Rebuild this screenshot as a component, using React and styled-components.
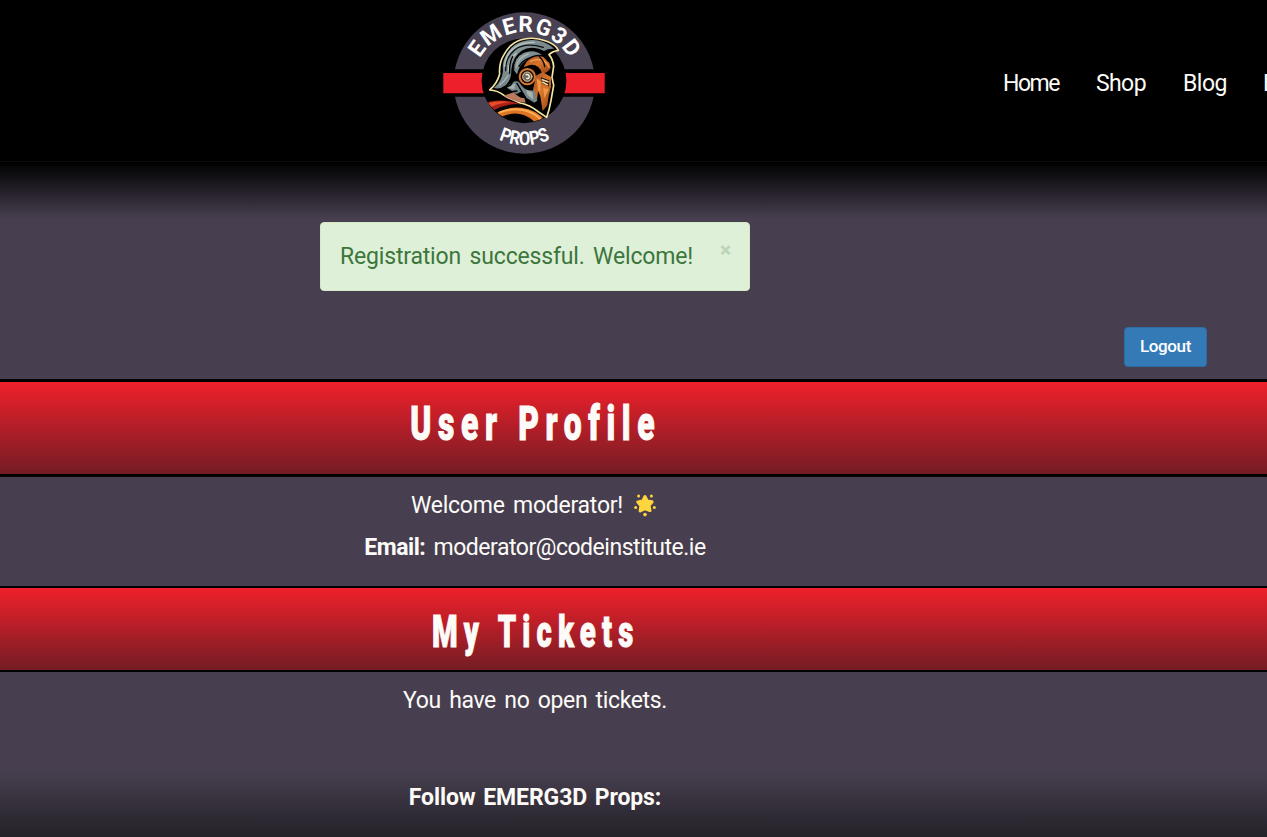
import React from 'react';
import styled, { createGlobalStyle } from 'styled-components';

const GlobalStyle = createGlobalStyle`
  * { box-sizing: border-box; }
  html, body { margin: 0; height: 837px; overflow: hidden; background: #473f4f; }
  body { font-family: Roboto, "Liberation Sans", sans-serif; font-size: 23px; color: #fdfbf8; }
  h1, h2, p { margin: 0; }
`;

const Page = styled.div`
  display: flex;
  flex-direction: column;
  width: 100%;
  height: 837px;
  overflow: hidden;
`;

const Header = styled.header`
  display: flex;
  flex: none;
  height: 162px;
  padding-left: 434px;
  background: #000;
  border-bottom: 1px solid #0d0c0e;
`;

const Logo = styled.svg`
  flex: none;
  width: 180px;
  height: 161px;
`;

const Nav = styled.nav`
  display: flex;
  flex: none;
  align-items: center;
  margin-left: 387px;
  padding: 6px 0 0;
`;

const NavLink = styled.a`
  flex: none;
  width: ${(p) => p.$width}px;
  padding-left: 2px;
  white-space: nowrap;
  letter-spacing: ${(p) => p.$spacing}px;
`;

const Main = styled.main`
  display: flex;
  flex-direction: column;
  flex: none;
  height: 608px;
  background: linear-gradient(#000 0, #473f4f 57px);
`;

const Messages = styled.div`
  display: flex;
  justify-content: center;
  width: 1070px;
  padding-top: 60px;
`;

const Alert = styled.div`
  display: flex;
  justify-content: space-between;
  width: 430px;
  height: 69px;
  padding: 0 18px 0 19px;
  color: #3c763d;
  background: #dff0d8;
  border: 1px solid #d6e9c6;
  border-radius: 4px;
`;

const Message = styled.span`
  line-height: 68px;
  white-space: nowrap;
  letter-spacing: -0.17px;
  word-spacing: 3px;
`;

const Close = styled.button`
  height: 54px;
  padding: 0;
  border: 0;
  background: none;
  font: 900 21px/55px Roboto, sans-serif;
  color: #bdd5b8;
`;

const Actions = styled.div`
  display: flex;
  justify-content: flex-end;
  padding: 36px 60px 12px;
`;

const Button = styled.button`
  width: 83px;
  height: 40px;
  padding: 0 0 3px;
  border: 1px solid #2e6da4;
  border-radius: 4px;
  background: #337ab7;
  color: #fff;
  font: 500 17px Roboto, sans-serif;
  letter-spacing: -0.4px;
`;

const Band = styled.section`
  flex: none;
  height: ${(p) => p.$height}px;
  border: solid #000;
  border-width: ${(p) => p.$edge}px 0;
  background: linear-gradient(#ef202b, #741c24);
`;

const Title = styled.h1`
  width: 1070px;
  padding: ${(p) => p.$top}px 0 0 2px;
  text-align: center;
  white-space: nowrap;
  font-size: ${(p) => p.$size}px;
  line-height: 1;
  font-weight: 900;
  letter-spacing: ${(p) => p.$spacing}px;
  -webkit-text-stroke: 1px currentColor;
  transform: scaleX(0.65);
`;

const Details = styled.div`
  width: 1070px;
  height: ${(p) => p.$height}px;
  padding-top: 7px;
`;

const Line = styled.p`
  display: flex;
  justify-content: center;
  align-items: center;
  height: 42px;
  white-space: pre;
  letter-spacing: ${(p) => p.$spacing}px;
  word-spacing: 3px;
`;

const Star = styled.svg`
  width: 22px;
  height: 23px;
  margin: 0 3px 0 11px;
`;

const Footer = styled.footer`
  flex: 1;
  background: linear-gradient(#473f4f, #242229);
`;

const Follow = styled.p`
  width: 1070px;
  padding-top: 14px;
  text-align: center;
  line-height: 27px;
  font-weight: 700;
  letter-spacing: -0.1px;
  word-spacing: 2px;
`;

function BrandLogo() {
  return (
    <Logo viewBox="0 0 180 161">
      <defs>
        <path id="arcTop" d="M39.5 83a51 51 0 0 1 102 0" />
        <path id="arcBottom" d="M28.5 83a62 62 0 0 0 124 0" />
        <clipPath id="inner"><circle cx="132" cy="152" r="126" /></clipPath>
        <linearGradient id="steel" x1="0" x2="1" y2="1">
          <stop stopColor="#91a0a1" /><stop offset=".55" stopColor="#75868a" /><stop offset="1" stopColor="#414e54" />
        </linearGradient>
        <linearGradient id="bronze" x2="1" y2="1">
          <stop stopColor="#a45225" /><stop offset=".5" stopColor="#d8752d" /><stop offset="1" stopColor="#924116" />
        </linearGradient>
      </defs>
      <circle cx="90.3" cy="83" r="70.7" fill="#494252" />
      <path fill="#000" d="M8 69.2h164v27.6H8z" />
      <path fill="#ed1f2a" d="M9.3 73h161.4v20.3H9.3z" />
      <circle cx="90" cy="80.8" r="42.4" fill="#000" />
      <g fill="#fff" fontFamily="Roboto, sans-serif" fontWeight="700" textAnchor="middle">
        <text fontSize="22.5"><textPath href="#arcTop" startOffset="50%" textLength="109" lengthAdjust="spacing">EMERG3D</textPath></text>
        <text fontSize="19"><textPath href="#arcBottom" startOffset="50%" textLength="53" lengthAdjust="spacingAndGlyphs">PROPS</textPath></text>
      </g>
      <g transform="translate(46 30) scale(.3333)" strokeLinejoin="round" strokeLinecap="round">
        <path fill="#000" stroke="#f5e5a5" strokeWidth="5" d="M29 180Q52 160 59 132Q56 100 72 74Q89 41 121 30Q158 18 198 33Q227 43 235 61Q216 64 207 74Q219 88 221 109L216 142L221 166L213 212Q208 240 200 262L176 246Q151 225 120 219L78 200Q52 180 29 180z" />
        <path fill="url(#steel)" d="M42 174Q66 153 69 123Q65 94 82 69Q100 40 132 33Q184 22 223 56Q203 55 192 63Q153 44 125 62Q98 80 94 119Q95 148 78 165Q60 179 42 174z" />
        <path fill="none" stroke="#0c0f10" strokeWidth="4" d="M77 122Q76 82 104 60Q134 36 190 52" />
        <path fill="none" stroke="#bcc5bb" strokeWidth="4" d="M74 109Q75 79 99 56Q124 36 163 37M85 124Q85 91 109 70" />
        <path fill="url(#steel)" stroke="#000" strokeWidth="3" d="M101 121Q98 83 132 67Q164 54 190 76Q158 73 139 91Q118 106 112 136z" />
        <path fill="none" stroke="#a8b5b2" strokeWidth="4" d="M109 113Q114 83 145 72M59 165Q77 151 84 137" />
        <path fill="none" stroke="#000" strokeWidth="4" d="M117 109Q132 83 167 79M98 80Q87 99 89 130" />
        <path fill="url(#bronze)" d="M141 94Q163 73 192 81Q210 91 212 114Q203 130 186 130Q176 101 149 105L130 112z" />
        <path fill="none" stroke="#f29b49" strokeWidth="4" d="M151 94Q177 83 193 94Q205 102 207 112" />
        <path fill="none" stroke="#000" strokeWidth="4" d="M178 80Q192 92 194 110M188 76L205 94" />
        <path fill="url(#bronze)" d="M168 137L188 126L213 141L213 170L206 198L202 226L188 243L181 198L174 184L171 210L159 180z" />
        <path fill="#f19745" d="M170 145L183 155L181 187L174 180zM190 174L207 177L193 205z" />
        <path fill="#10100f" d="M182 142L208 151L206 169L187 161z" />
        <path fill="none" stroke="#ffd59b" strokeWidth="5" d="M187 149L204 155M188 157L202 164" />
        <path fill="#75868a" d="M81 173Q97 150 116 155L126 168Q139 185 163 181L172 212L163 218L140 204L126 184L109 192z" />
        <path fill="#a9b3ae" d="M139 179L157 187L160 209L142 194zM84 174L105 160L103 178z" />
        <path fill="none" stroke="#000" strokeWidth="4" d="M68 174L91 166L105 145M111 160L134 199M83 187L111 183" />
        <circle cx="142" cy="140" r="23" fill="#1a1311" stroke="#d9792d" strokeWidth="6" />
        <circle cx="142" cy="140" r="14" fill="#696966" stroke="#f2c68e" strokeWidth="3" />
        <path fill="none" stroke="#fff0c9" strokeWidth="4" d="M138 134Q147 132 148 140Q147 147 140 145" />
        <path fill="#b9795d" d="M71 197L101 187Q120 207 133 204L137 218Q105 218 71 197z" />
        <g clipPath="url(#inner)">
          <path fill="#ad2019" d="M14 220Q45 207 90 214L130 225Q76 224 37 244z" />
          <path fill="#e64c26" d="M22 220Q62 209 92 217Q59 218 34 231z" />
          <path fill="#df7524" d="M43 253Q82 229 124 233Q169 238 198 273L166 280Q137 250 95 252L58 270z" />
          <path fill="none" stroke="#ffad52" strokeWidth="6" d="M58 248Q91 234 125 239Q160 245 180 266" />
          <path fill="none" stroke="#080605" strokeWidth="7" d="M38 246Q82 222 125 226M68 263Q117 240 158 275" />
        </g>
      </g>
    </Logo>
  );
}

function GlowingStar() {
  return (
    <Star viewBox="0 0 22 23" fill="#ffd53e">
      <path stroke="#ffd53e" strokeWidth="3.2" strokeLinejoin="round" d="M11 2.7L13.2 7.2L18 7.9L14.9 11.5L15.9 16.5L11 14.5L6.2 16.8L7 11.7L3.9 8L8.7 7.2z" />
      <circle cx="4.6" cy="2" r="1.5" /><circle cx="17.4" cy="2" r="1.5" />
      <circle cx="1.7" cy="13.6" r="1.5" /><circle cx="20.3" cy="13.6" r="1.5" />
      <circle cx="11" cy="20.6" r="1.8" />
    </Star>
  );
}

export default function App() {
  return (
    <Page>
      <GlobalStyle />
      <Header>
        <BrandLogo />
        <Nav>
          <NavLink $width={93} $spacing={-1.5}>Home</NavLink>
          <NavLink $width={87} $spacing={-0.6}>Shop</NavLink>
          <NavLink $width={80} $spacing={-0.5}>Blog</NavLink>
          <NavLink $width={80} $spacing={0}>Events</NavLink>
        </Nav>
      </Header>
      <Main>
        <Messages>
          <Alert>
            <Message>Registration successful. Welcome!</Message>
            <Close aria-label="Close">×</Close>
          </Alert>
        </Messages>
        <Actions><Button>Logout</Button></Actions>
        <Band $height={98} $edge={3}><Title $top={17} $size={49} $spacing={10.2}>User Profile</Title></Band>
        <Details $height={109}>
          <Line $spacing={-0.25}>Welcome moderator!<GlowingStar /></Line>
          <Line $spacing={-0.48}><b>Email:</b> moderator@codeinstitute.ie</Line>
        </Details>
        <Band $height={86} $edge={2}><Title as="h2" $top={21} $size={45} $spacing={9.5}>My Tickets</Title></Band>
        <Details $height={98}><Line $spacing={-0.36}>You have no open tickets.</Line></Details>
      </Main>
      <Footer><Follow>Follow EMERG3D Props:</Follow></Footer>
    </Page>
  );
}
